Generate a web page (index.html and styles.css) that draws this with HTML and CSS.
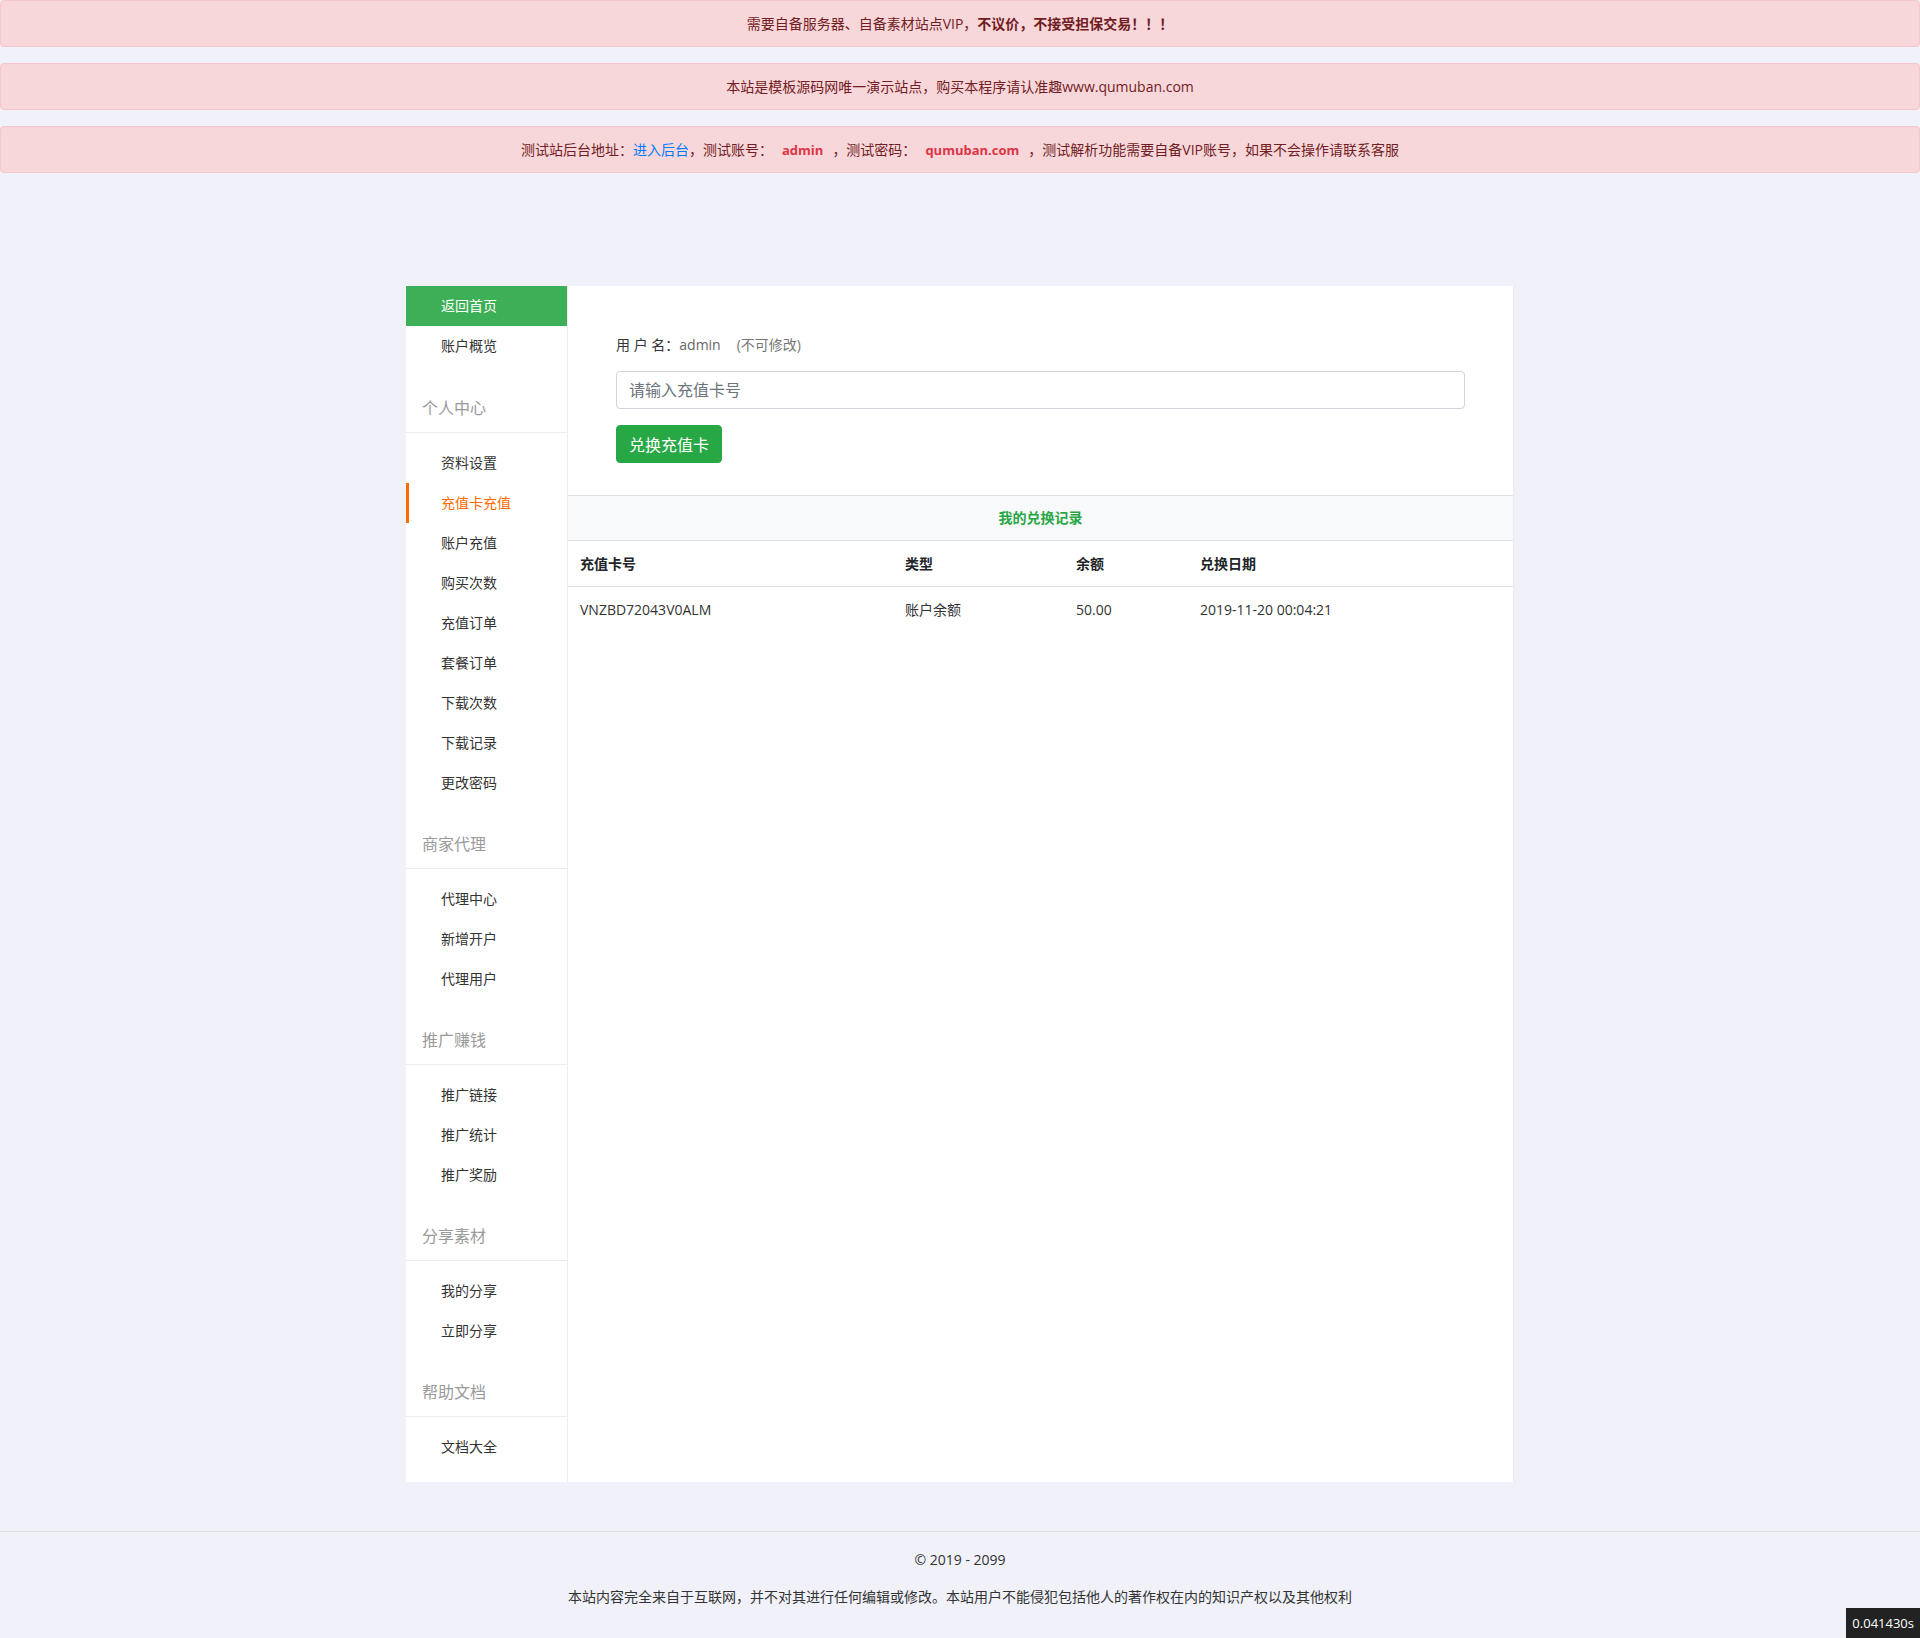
FILE: index.html
```html
<!DOCTYPE html>
<html lang="zh-CN">
<head>
<meta charset="utf-8">
<title>充值卡充值</title>
<link rel="stylesheet" href="styles.css">
</head>
<body>
<div class="alerts">
  <div class="alert">需要自备服务器、自备素材站点VIP，<b>不议价，不接受担保交易！！！</b></div>
  <div class="alert">本站是模板源码网唯一演示站点，购买本程序请认准趣www.qumuban.com</div>
  <div class="alert">测试站后台地址：<a class="alert-link" href="#">进入后台</a>，测试账号：<span class="hl">admin</span>，测试密码：<span class="hl">qumuban.com</span>，测试解析功能需要自备VIP账号，如果不会操作请联系客服</div>
</div>

<div class="main">
  <div class="panel">
    <aside class="sidebar">
      <ul class="menu menu-top">
        <li class="item home"><a href="#">返回首页</a></li>
        <li class="item"><a href="#">账户概览</a></li>
      </ul>
      <div class="group-title">个人中心</div>
      <ul class="menu">
        <li class="item"><a href="#">资料设置</a></li>
        <li class="item active"><a href="#">充值卡充值</a></li>
        <li class="item"><a href="#">账户充值</a></li>
        <li class="item"><a href="#">购买次数</a></li>
        <li class="item"><a href="#">充值订单</a></li>
        <li class="item"><a href="#">套餐订单</a></li>
        <li class="item"><a href="#">下载次数</a></li>
        <li class="item"><a href="#">下载记录</a></li>
        <li class="item"><a href="#">更改密码</a></li>
      </ul>
      <div class="group-title">商家代理</div>
      <ul class="menu">
        <li class="item"><a href="#">代理中心</a></li>
        <li class="item"><a href="#">新增开户</a></li>
        <li class="item"><a href="#">代理用户</a></li>
      </ul>
      <div class="group-title">推广赚钱</div>
      <ul class="menu">
        <li class="item"><a href="#">推广链接</a></li>
        <li class="item"><a href="#">推广统计</a></li>
        <li class="item"><a href="#">推广奖励</a></li>
      </ul>
      <div class="group-title">分享素材</div>
      <ul class="menu">
        <li class="item"><a href="#">我的分享</a></li>
        <li class="item"><a href="#">立即分享</a></li>
      </ul>
      <div class="group-title">帮助文档</div>
      <ul class="menu">
        <li class="item"><a href="#">文档大全</a></li>
      </ul>
    </aside>

    <section class="content">
      <form class="form">
        <div class="label">用 户 名：<span class="uname">admin</span><span class="note">(不可修改)</span></div>
        <input class="form-control" type="text" placeholder="请输入充值卡号">
        <button class="btn" type="button">兑换充值卡</button>
      </form>
      <div class="records-head">我的兑换记录</div>
      <table class="table">
        <colgroup>
          <col class="c1"><col class="c2"><col class="c3"><col>
        </colgroup>
        <thead>
          <tr><th>充值卡号</th><th>类型</th><th>余额</th><th>兑换日期</th></tr>
        </thead>
        <tbody>
          <tr><td>VNZBD72043V0ALM</td><td>账户余额</td><td>50.00</td><td>2019-11-20 00:04:21</td></tr>
        </tbody>
      </table>
    </section>
  </div>
</div>

<footer class="footer">
  <p>© 2019 - 2099</p>
  <p>本站内容完全来自于互联网，并不对其进行任何编辑或修改。本站用户不能侵犯包括他人的著作权在内的知识产权以及其他权利</p>
</footer>

<div class="timer">0.041430s</div>
</body>
</html>
```

FILE: styles.css
```css
* { box-sizing: border-box; }
html, body { margin: 0; padding: 0; }
body {
  background: #f0f1f9;
  font-family: "Open Sans", "Noto Sans CJK SC", sans-serif;
  font-size: 14px;
  line-height: 21px;
  color: #333;
}
a { text-decoration: none; }

.alerts { height: 189px; }
.alert {
  background: #f8d7da;
  border: 1px solid #f5c6cb;
  color: #721c24;
  border-radius: 4px;
  height: 47px;
  padding: 12px 20px;
  margin-bottom: 16px;
  text-align: center;
  font-size: 14px;
  line-height: 21px;
  overflow: hidden;
}
.alert b { font-weight: bold; }
.alert-link { color: #007bff; }
.alert .hl { color: #dc3545; font-weight: bold; padding: 0 9px; font-size: 13px; line-height: 1; }

.main { padding: 97px 0 49px; }
.panel {
  width: 1108px;
  margin: 0 auto;
  display: flex;
  align-items: stretch;
  background: #fff;
}

.sidebar {
  width: 162px;
  flex: none;
  background: #fff;
  border-right: 1px solid #ececf0;
  padding-bottom: 5px;
}
.menu { list-style: none; margin: 0; padding: 10px 0; }
.menu-top { padding: 0 0 11px; }
.item a {
  display: block;
  height: 40px;
  line-height: 39px;
  padding-left: 35px;
  color: #333;
  font-size: 14px;
}
.item.home a { background: #3daf57; color: #fff; }
.item.active a { color: #ff6a00; border-left: 3px solid #ff6a00; padding-left: 32px; }
.group-title {
  padding: 19px 16px 12px;
  line-height: 24px;
  font-size: 16px;
  color: #9a9a9a;
  border-bottom: 1px solid #ececf0;
}

.content {
  flex: 1;
  border-right: 1px solid #ececf0;
}
.form { padding: 48px 48px 32px 48px; }
.label { color: #333; line-height: 21px; height: 21px; margin-bottom: 16px; font-size: 14px; }
.uname { color: #666; }
.note { color: #777; margin-left: 16px; }
.form-control {
  display: block;
  width: 100%;
  height: 38px;
  padding: 6px 12px;
  font-size: 16px;
  font-family: inherit;
  color: #495057;
  border: 1px solid #ced4da;
  border-radius: 4px;
  background: #fff;
  margin: 0 0 16px;
}
.form-control::placeholder { color: #6c757d; }
.btn {
  display: block;
  height: 38px;
  padding: 0 12px;
  font-size: 16px;
  font-family: inherit;
  color: #fff;
  background: #28a745;
  border: 1px solid #28a745;
  border-radius: 4px;
}

.records-head {
  background: #f8f9fa;
  border-top: 1px solid #dee2e6;
  border-bottom: 1px solid #dee2e6;
  height: 46px;
  line-height: 44px;
  text-align: center;
  color: #28a745;
  font-weight: bold;
  font-size: 14px;
}

.table { width: 100%; border-collapse: collapse; table-layout: fixed; }
.c1 { width: 325px; }
.c2 { width: 171px; }
.c3 { width: 124px; }
.table th, .table td {
  text-align: left;
  padding: 12px;
  line-height: 21px;
  font-size: 14px;
}
.table th { color: #212529; font-weight: bold; border-bottom: 1px solid #dee2e6; }
.table td { color: #333; }

.footer {
  border-top: 1px solid #dfe0e6;
  text-align: center;
  padding: 17px 0 14px;
  color: #333;
  font-size: 14px;
}
.footer p { margin: 0 0 16px; line-height: 21px; height: 21px; }

.timer {
  position: fixed;
  right: 0;
  bottom: 0;
  height: 30px;
  line-height: 30px;
  padding: 0 6px;
  background: #222;
  color: #fff;
  font-size: 13px;
}
```
